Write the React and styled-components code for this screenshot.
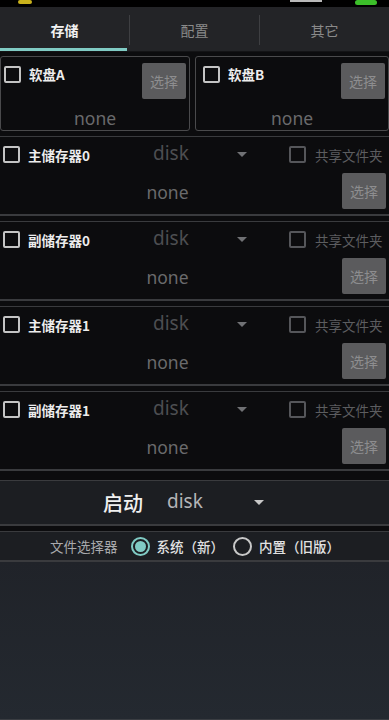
import React from "react";
import styled, { createGlobalStyle } from "styled-components";

const GlobalStyle = createGlobalStyle`
  html, body {
    margin: 0;
    padding: 0;
    background: #0c0c0e;
  }
  body {
    font-family: "Noto Sans CJK SC", "Noto Sans", sans-serif;
  }
  * {
    box-sizing: border-box;
  }
`;

const Page = styled.div`
  width: 389px;
  height: 720px;
  display: flex;
  flex-direction: column;
  background: #0c0c0e;
  overflow: hidden;
`;

const StatusBar = styled.div`
  height: 7px;
  background: #000;
  display: flex;
  align-items: flex-start;
  overflow: hidden;
`;

const Glow = styled.div`
  width: ${(p) => p.w}px;
  height: ${(p) => p.h}px;
  margin-left: ${(p) => p.ml}px;
  background: ${(p) => p.color};
  border-radius: ${(p) => p.r || 0}px;
`;

const TabBar = styled.div`
  height: 45px;
  background: #232427;
  display: flex;
  border-bottom: 1px solid #141416;
`;

const Tab = styled.div`
  flex: 1;
  position: relative;
  display: flex;
  align-items: center;
  justify-content: center;
  font-size: 14px;
  color: ${(p) => (p.active ? "#f2f2f2" : "#8a8a8a")};
  font-weight: ${(p) => (p.active ? 700 : 400)};
  padding-top: 2px;

  &::after {
    content: "";
    display: ${(p) => (p.active ? "block" : "none")};
    position: absolute;
    left: 0;
    right: 2px;
    bottom: 0;
    height: 3px;
    background: #80cbc4;
  }
`;

const TabSep = styled.div`
  width: 1px;
  margin: 8px 0 6px;
  background: #3e3f42;
`;

const Content = styled.div`
  padding-top: 4px;
  display: flex;
  flex-direction: column;
`;

const FloppyRow = styled.div`
  display: flex;
  gap: 5px;
  margin-bottom: 5px;
`;

const FloppyBox = styled.div`
  flex: ${(p) => p.flex};
  height: 75px;
  border: 1.5px solid #4a4a4c;
  border-radius: 3px;
  padding: 6px 3px 0 3px;
  display: flex;
  flex-direction: column;
`;

const FloppyTop = styled.div`
  display: flex;
  align-items: flex-start;
  justify-content: space-between;
`;

const CheckLine = styled.div`
  display: flex;
  align-items: center;
  gap: 8px;
  height: 22px;
  margin-left: ${(p) => p.ml || 0}px;
`;

const Check = styled.div`
  width: 17px;
  height: 17px;
  border: 2px solid ${(p) => (p.dim ? "#55565a" : "#c4c4c4")};
  border-radius: 2px;
  flex-shrink: 0;
`;

const Label = styled.span`
  font-size: 13.5px;
  color: ${(p) => (p.dim ? "#5c5d60" : "#ededed")};
  font-weight: ${(p) => (p.dim ? 400 : 600)};
  white-space: nowrap;
`;

const PickButton = styled.div`
  width: 44px;
  height: 36px;
  background: #5b5b5d;
  border-radius: 2px;
  display: flex;
  align-items: center;
  justify-content: center;
  color: #8d8d8f;
  font-size: 14px;
  flex-shrink: 0;
`;

const NoneText = styled.div`
  font-family: "Noto Sans", "Open Sans", sans-serif;
  font-size: 17.5px;
  color: #6a6a6c;
  text-align: center;
  line-height: 1;
  margin-top: ${(p) => p.mt || 0}px;
`;

const Section = styled.div`
  height: 80px;
  border-top: 1px solid #3a3b3e;
  border-bottom: 2px solid #3a3b3e;
  margin-bottom: 5px;
  display: flex;
  flex-direction: column;
  padding: 0 3px;
`;

const SectionTop = styled.div`
  height: 35px;
  display: grid;
  grid-template-columns: 150px 84px 52px 1fr;
  align-items: center;
`;

const Disk = styled.span`
  font-family: "Noto Sans", "Open Sans", sans-serif;
  font-size: 19px;
  color: ${(p) => p.color || "#4d4e51"};
  line-height: 1;
  padding-bottom: 3px;
`;

const Caret = styled.div`
  width: 0;
  height: 0;
  border-left: 5px solid transparent;
  border-right: 5px solid transparent;
  border-top: 5px solid ${(p) => p.color || "#707174"};
`;

const ShareLine = styled.div`
  display: flex;
  align-items: center;
  gap: 9px;
`;

const SectionBottom = styled.div`
  display: flex;
  align-items: center;
  height: 38px;
`;

const NoneWrap = styled.div`
  flex: 1;
  padding: 4px 10px 0 0;
`;

const BootRow = styled.div`
  height: 46px;
  margin-top: 4px;
  background: #1c1e22;
  border-top: 1px solid #3a3b3e;
  border-bottom: 2px solid #3a3b3e;
  display: flex;
  align-items: center;
  padding-left: 103px;
`;

const BootLabel = styled.span`
  font-size: 20px;
  color: #f0f0f0;
  font-weight: 500;
  margin-right: 24px;
`;

const BootSelect = styled.div`
  width: 97px;
  display: flex;
  align-items: center;
  justify-content: space-between;
`;

const PickerRow = styled.div`
  height: 31px;
  margin-top: 5px;
  background: #1c1e22;
  border-top: 1px solid #3a3b3e;
  border-bottom: 2px solid #3a3b3e;
  display: flex;
  align-items: center;
  padding-left: 50px;
  font-size: 13.5px;
  color: #a9aaad;
`;

const Radio = styled.div`
  width: 19px;
  height: 19px;
  border-radius: 50%;
  border: 2px solid ${(p) => (p.checked ? "#80cbc4" : "#c8c8c8")};
  display: flex;
  align-items: center;
  justify-content: center;
  margin: 0 7px 0 ${(p) => p.ml}px;

  &::after {
    content: "";
    display: ${(p) => (p.checked ? "block" : "none")};
    width: 11px;
    height: 11px;
    border-radius: 50%;
    background: #80cbc4;
  }
`;

const RadioText = styled.span`
  color: #e2e2e2;
  font-weight: 500;
`;

const Bottom = styled.div`
  flex: 1;
  background: linear-gradient(#202329, #242930);
  border-bottom: 1px solid #3a3d42;
`;

function StorageSection({ name }) {
  return (
    <Section>
      <SectionTop>
        <CheckLine>
          <Check />
          <Label>{name}</Label>
        </CheckLine>
        <Disk>disk</Disk>
        <Caret />
        <ShareLine>
          <Check dim />
          <Label dim>共享文件夹</Label>
        </ShareLine>
      </SectionTop>
      <SectionBottom>
        <NoneWrap>
          <NoneText>none</NoneText>
        </NoneWrap>
        <PickButton>选择</PickButton>
      </SectionBottom>
    </Section>
  );
}

function Floppy({ name, flex }) {
  return (
    <FloppyBox flex={flex}>
      <FloppyTop>
        <CheckLine ml={flex === 190 ? 0 : 4}>
          <Check />
          <Label>{name}</Label>
        </CheckLine>
        <PickButton>选择</PickButton>
      </FloppyTop>
      <NoneText mt={11}>none</NoneText>
    </FloppyBox>
  );
}

export default function App() {
  return (
    <Page>
      <GlobalStyle />
      <StatusBar>
        <Glow w={14} h={4} ml={18} r={4} color="#c9b21c" />
        <Glow w={32} h={2} ml={258} color="#b9b9b9" />
        <Glow w={22} h={5} ml={33} r={8} color="#3cbf2a" />
      </StatusBar>
      <TabBar>
        <Tab active>存储</Tab>
        <TabSep />
        <Tab>配置</Tab>
        <TabSep />
        <Tab>其它</Tab>
      </TabBar>
      <Content>
        <FloppyRow>
          <Floppy name="软盘A" flex={190} />
          <Floppy name="软盘B" flex={194} />
        </FloppyRow>
        <StorageSection name="主储存器0" />
        <StorageSection name="副储存器0" />
        <StorageSection name="主储存器1" />
        <StorageSection name="副储存器1" />
      </Content>
      <BootRow>
        <BootLabel>启动</BootLabel>
        <BootSelect>
          <Disk color="#b4b5b8">disk</Disk>
          <Caret color="#c8c8c8" />
        </BootSelect>
      </BootRow>
      <PickerRow>
        文件选择器
        <Radio checked ml={13} />
        <RadioText>系统（新）</RadioText>
        <Radio ml={9} />
        <RadioText>内置（旧版）</RadioText>
      </PickerRow>
      <Bottom />
    </Page>
  );
}
